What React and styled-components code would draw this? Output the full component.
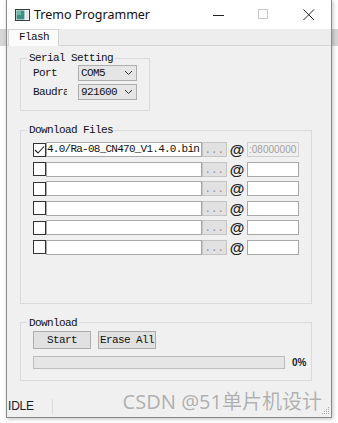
import React from 'react'
import styled, { createGlobalStyle } from 'styled-components'

const Global = createGlobalStyle`
  html, body {
    margin: 0;
    padding: 0;
    background: #fff;
  }
  body {
    width: 338px;
    height: 423px;
    overflow: hidden;
    background: linear-gradient(#fff 0, #fff 29px, #d6d6d6 29px, #d6d6d6 46px, #fff 46px);
  }
`

const mono = `"Liberation Mono", "DejaVu Sans Mono", monospace`
const sans = `"Liberation Sans", Arial, sans-serif`

const Desktop = styled.div`
  padding-left: 6px;
  height: 423px;
  box-sizing: border-box;
`

const Window = styled.div`
  position: relative;
  width: 326px;
  height: 418px;
  box-sizing: border-box;
  border: 1px solid #8a8a8a;
  border-top: none;
  background: #f0f0f0;
  box-shadow: 1px 1px 4px rgba(0, 0, 0, 0.25);
  display: flex;
  flex-direction: column;
`

const TitleBar = styled.div`
  height: 29px;
  background: #fff;
  display: flex;
  align-items: center;
  padding-left: 8px;
`

const AppTitle = styled.span`
  font-family: "Noto Sans", sans-serif;
  font-size: 12.5px;
  color: #111;
  margin-left: 4px;
  flex: 1;
`

const Controls = styled.div`
  display: flex;
  align-items: center;
`

const CtrlButton = styled.div`
  width: 45px;
  height: 29px;
  display: flex;
  align-items: center;
  justify-content: center;
`

const TabStrip = styled.div`
  height: 17px;
  background: #ededed;
  border-bottom: 1px solid #d4d4d4;
  box-sizing: border-box;
  display: flex;
  align-items: flex-end;
  padding-left: 1px;
`

const Tab = styled.div`
  width: 51px;
  height: 17px;
  box-sizing: border-box;
  background: #fbfbfb;
  border: 1px solid #d4d4d4;
  border-bottom: none;
  margin-bottom: -1px;
  font-family: ${mono};
  font-size: 11px;
  letter-spacing: -0.6px;
  color: #111;
  padding-left: 10px;
  line-height: 15px;
`

const Content = styled.div`
  flex: 1;
  padding: 6px 0 0 13px;
  display: flex;
  flex-direction: column;
`

const Group = styled.fieldset`
  margin: ${({ $top }) => $top || 0}px 0 0 0;
  padding: 0;
  width: ${({ $w }) => $w}px;
  box-sizing: border-box;
  border: 1px solid #dadada;
  min-width: 0;
`

const Legend = styled.legend`
  margin-left: 6px;
  padding: 0 2px;
  font-family: ${mono};
  font-size: 11px;
  letter-spacing: -0.6px;
  line-height: 12px;
  color: #111;
`

const GroupBody = styled.div`
  padding: ${({ $pad }) => $pad};
  display: flex;
  flex-direction: column;
  gap: ${({ $gap }) => $gap}px;
`

const FieldRow = styled.div`
  display: flex;
  align-items: center;
  height: ${({ $h }) => $h}px;
`

const Label = styled.span`
  width: 34px;
  overflow: hidden;
  white-space: nowrap;
  font-family: ${mono};
  font-size: 11px;
  letter-spacing: -0.6px;
  color: #111;
  margin-right: 11px;
`

const Combo = styled.div`
  width: 59px;
  height: 16px;
  box-sizing: border-box;
  background: #e5e5e5;
  border: 1px solid #adadad;
  display: flex;
  align-items: center;
  padding-left: 2px;
  font-family: ${mono};
  font-size: 11px;
  letter-spacing: -0.6px;
  color: #111;
`

const ComboText = styled.span`
  flex: 1;
`

const Check = styled.div`
  width: 13px;
  height: 14px;
  box-sizing: border-box;
  border: 1px solid #333;
  background: #fff;
  display: flex;
  align-items: center;
  justify-content: center;
`

const PathField = styled.div`
  width: 156px;
  height: 15px;
  box-sizing: border-box;
  background: #fff;
  border: 1px solid #a8a8a8;
  font-family: ${mono};
  font-size: 11px;
  letter-spacing: -0.75px;
  line-height: 13px;
  color: #111;
  white-space: nowrap;
  overflow: hidden;
`

const Browse = styled.div`
  width: 25px;
  height: 15px;
  box-sizing: border-box;
  background: #e1e1e1;
  border: 1px solid #c4c4c4;
  font-family: ${mono};
  font-size: 10px;
  line-height: 15px;
  color: #8a8a8a;
  text-align: center;
  letter-spacing: 0.5px;
`

const At = styled.span`
  width: 20px;
  text-align: center;
  font-family: ${sans};
  font-size: 15px;
  font-weight: bold;
  color: #222;
  line-height: 15px;
`

const AddrField = styled.div`
  width: 52px;
  height: 15px;
  box-sizing: border-box;
  background: ${({ $disabled }) => ($disabled ? '#f0f0f0' : '#fff')};
  border: 1px solid ${({ $disabled }) => ($disabled ? '#cfcfcf' : '#a8a8a8')};
  font-family: ${sans};
  font-size: 10px;
  line-height: 13px;
  color: #a0a0a0;
  overflow: hidden;
  white-space: nowrap;
  padding-left: 1px;
`

const Button = styled.div`
  width: 58px;
  height: 18px;
  box-sizing: border-box;
  background: #e1e1e1;
  border: 1px solid #adadad;
  font-family: ${mono};
  font-size: 11px;
  letter-spacing: -0.6px;
  line-height: 16px;
  color: #111;
  text-align: center;
`

const ButtonRow = styled.div`
  display: flex;
  gap: 7px;
`

const Progress = styled.div`
  width: 252px;
  height: 13px;
  box-sizing: border-box;
  background: #e6e6e6;
  border: 1px solid #bcbcbc;
`

const Percent = styled.span`
  margin-left: 7px;
  font-family: ${sans};
  font-size: 10px;
  font-weight: bold;
  color: #222;
`

const StatusBar = styled.div`
  height: 27px;
  display: flex;
  align-items: center;
  padding-top: 6px;
  box-sizing: border-box;
`

const StatusText = styled.span`
  width: 44px;
  padding-left: 1px;
  font-family: ${sans};
  font-size: 12px;
  letter-spacing: -0.2px;
  color: #1b1b2f;
  border-right: 1px solid #dcdcdc;
  line-height: 15px;
`

const Watermark = styled.span`
  position: absolute;
  right: 9px;
  bottom: 2px;
  font-family: "Noto Sans", "Noto Sans CJK SC", sans-serif;
  font-size: 20px;
  color: rgba(110, 110, 110, 0.55);
  text-shadow: 0 0 1px rgba(255, 255, 255, 0.9);
  white-space: nowrap;
`

const Grip = styled.svg`
  position: absolute;
  right: 1px;
  bottom: 2px;
`

const AppIcon = () => (
  <svg width='15' height='12' viewBox='0 0 15 12'>
    <rect x='0.5' y='0.5' width='14' height='11' fill='#fff' stroke='#3a3a3a' />
    <rect x='1.5' y='1.5' width='8' height='9' fill='#3f8f86' />
    <rect x='2' y='2' width='4' height='4' fill='#6fb8ad' />
    <rect x='10.5' y='1.5' width='3' height='9' fill='#dfe8e8' />
  </svg>
)

const Chevron = () => (
  <svg width='14' height='8' viewBox='0 0 14 8'>
    <path d='M3 2 L6.5 5.5 L10 2' fill='none' stroke='#333' strokeWidth='1' />
  </svg>
)

const files = [
  { on: true, path: '4.0/Ra-08_CN470_V1.4.0.bin', addr: ':08000000' },
  { on: false, path: '', addr: '' },
  { on: false, path: '', addr: '' },
  { on: false, path: '', addr: '' },
  { on: false, path: '', addr: '' },
  { on: false, path: '', addr: '' }
]

export default function App () {
  return (
    <Desktop>
      <Global />
      <Window>
        <TitleBar>
          <AppIcon />
          <AppTitle>Tremo Programmer</AppTitle>
          <Controls>
            <CtrlButton>
              <svg width='12' height='12' viewBox='0 0 12 12'>
                <line x1='0' y1='6.5' x2='11' y2='6.5' stroke='#222' strokeWidth='1' />
              </svg>
            </CtrlButton>
            <CtrlButton>
              <svg width='11' height='11' viewBox='0 0 11 11'>
                <rect x='0.5' y='0.5' width='9' height='9' fill='none' stroke='#c8c8c8' />
              </svg>
            </CtrlButton>
            <CtrlButton>
              <svg width='12' height='12' viewBox='0 0 12 12'>
                <path d='M0.5 0.5 L11 11 M11 0.5 L0.5 11' stroke='#222' strokeWidth='1' />
              </svg>
            </CtrlButton>
          </Controls>
        </TitleBar>
        <TabStrip>
          <Tab>Flash</Tab>
        </TabStrip>
        <Content>
          <Group $w={130}>
            <Legend>Serial Setting</Legend>
            <GroupBody $pad='1px 0 10px 12px' $gap={3}>
              <FieldRow $h={16}>
                <Label>Port</Label>
                <Combo>
                  <ComboText>COM5</ComboText>
                  <Chevron />
                </Combo>
              </FieldRow>
              <FieldRow $h={16}>
                <Label>Baudrate</Label>
                <Combo>
                  <ComboText>921600</ComboText>
                  <Chevron />
                </Combo>
              </FieldRow>
            </GroupBody>
          </Group>
          <Group $w={292} $top={13}>
            <Legend>Download Files</Legend>
            <GroupBody $pad='6px 0 48px 12px' $gap={4.5}>
              {files.map((f, i) => (
                <FieldRow $h={15} key={i}>
                  <Check>
                    {f.on && (
                      <svg width='11' height='10' viewBox='0 0 11 10'>
                        <path d='M1 5 L4 8 L10 1.5' fill='none' stroke='#222' strokeWidth='1.1' />
                      </svg>
                    )}
                  </Check>
                  <PathField>{f.path}</PathField>
                  <Browse>...</Browse>
                  <At>@</At>
                  <AddrField $disabled={f.on}>{f.addr}</AddrField>
                </FieldRow>
              ))}
            </GroupBody>
          </Group>
          <Group $w={292} $top={13}>
            <Legend>Download</Legend>
            <GroupBody $pad='2px 0 11px 12px' $gap={7}>
              <ButtonRow>
                <Button>Start</Button>
                <Button>Erase All</Button>
              </ButtonRow>
              <FieldRow $h={13}>
                <Progress />
                <Percent>0%</Percent>
              </FieldRow>
            </GroupBody>
          </Group>
        </Content>
        <StatusBar>
          <StatusText>IDLE</StatusText>
        </StatusBar>
        <Watermark>CSDN @51单片机设计</Watermark>
        <Grip width='8' height='8' viewBox='0 0 8 8'>
          <rect x='6' y='0' width='1' height='1' fill='#aaa' />
          <rect x='4' y='2' width='1' height='1' fill='#aaa' />
          <rect x='6' y='2' width='1' height='1' fill='#aaa' />
          <rect x='2' y='4' width='1' height='1' fill='#aaa' />
          <rect x='4' y='4' width='1' height='1' fill='#aaa' />
          <rect x='6' y='4' width='1' height='1' fill='#aaa' />
          <rect x='0' y='6' width='1' height='1' fill='#aaa' />
          <rect x='2' y='6' width='1' height='1' fill='#aaa' />
          <rect x='4' y='6' width='1' height='1' fill='#aaa' />
          <rect x='6' y='6' width='1' height='1' fill='#aaa' />
        </Grip>
      </Window>
    </Desktop>
  )
}
